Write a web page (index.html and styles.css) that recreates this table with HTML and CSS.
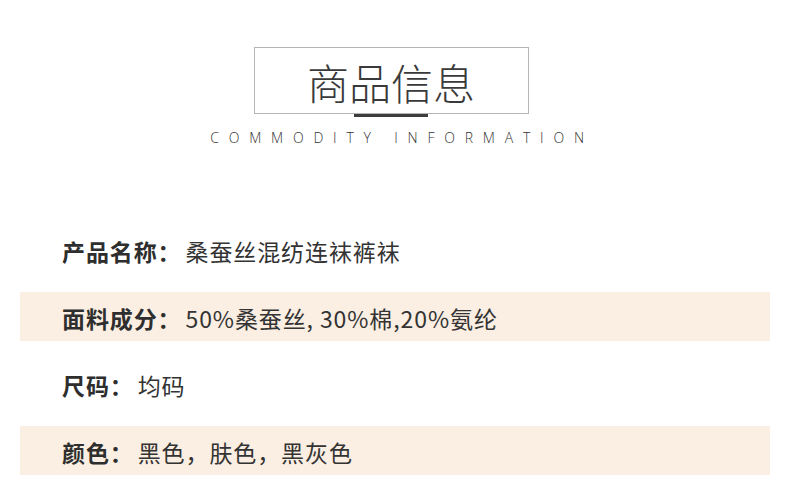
FILE: index.html
```html
<!DOCTYPE html>
<html lang="zh-CN">
<head>
<meta charset="utf-8">
<title>商品信息</title>
<link rel="stylesheet" href="styles.css">
</head>
<body>
<header class="header">
  <div class="title-box">商品信息</div>
  <div class="title-bar"></div>
  <div class="title-en">COMMODITY INFORMATION</div>
</header>
<section class="rows">
  <div class="row"><span class="label">产品名称：</span><span class="value">桑蚕丝混纺连袜裤袜</span></div>
  <div class="row alt"><span class="label">面料成分：</span><span class="value">50%桑蚕丝, 30%棉,20%氨纶</span></div>
  <div class="row"><span class="label">尺码：</span><span class="value">均码</span></div>
  <div class="row alt"><span class="label">颜色：</span><span class="value">黑色，肤色，黑灰色</span></div>
</section>
</body>
</html>
```
FILE: styles.css
```css
html, body {
  margin: 0;
  padding: 0;
  background: #ffffff;
}
body {
  width: 790px;
  font-family: "Noto Sans CJK SC", "Noto Sans", sans-serif;
  color: #333333;
}
.header {
  display: flex;
  flex-direction: column;
  align-items: center;
  padding-top: 47px;
  padding-right: 8px;
}
.title-box {
  box-sizing: border-box;
  width: 275px;
  height: 67px;
  border: 1px solid #b5b5b5;
  display: flex;
  align-items: center;
  justify-content: center;
  font-size: 42px;
  font-weight: 300;
  color: #3a3a3a;
  line-height: 1;
  padding-top: 2px;
}
.title-bar {
  width: 74px;
  height: 3px;
  background: #3d3d3d;
}
.title-en {
  margin-top: 11px;
  font-family: "Open Sans", "Liberation Sans", sans-serif;
  font-size: 14px;
  font-weight: 300;
  letter-spacing: 9.8px;
  color: #333333;
  line-height: 20px;
  padding-left: 22px;
}
.rows {
  margin-top: 77px;
  padding: 0 20px;
  display: flex;
  flex-direction: column;
  gap: 18px;
}
.row {
  box-sizing: border-box;
  height: 49px;
  display: flex;
  align-items: center;
  padding-left: 42px;
  padding-top: 3px;
  font-size: 23px;
  letter-spacing: 0.9px;
  line-height: 1;
  white-space: nowrap;
}
.row.alt {
  background: #fbeee2;
}
.label {
  font-weight: 700;
  color: #2e2e2e;
  margin-right: 4px;
}
.value {
  font-weight: 400;
  color: #333333;
}
```
